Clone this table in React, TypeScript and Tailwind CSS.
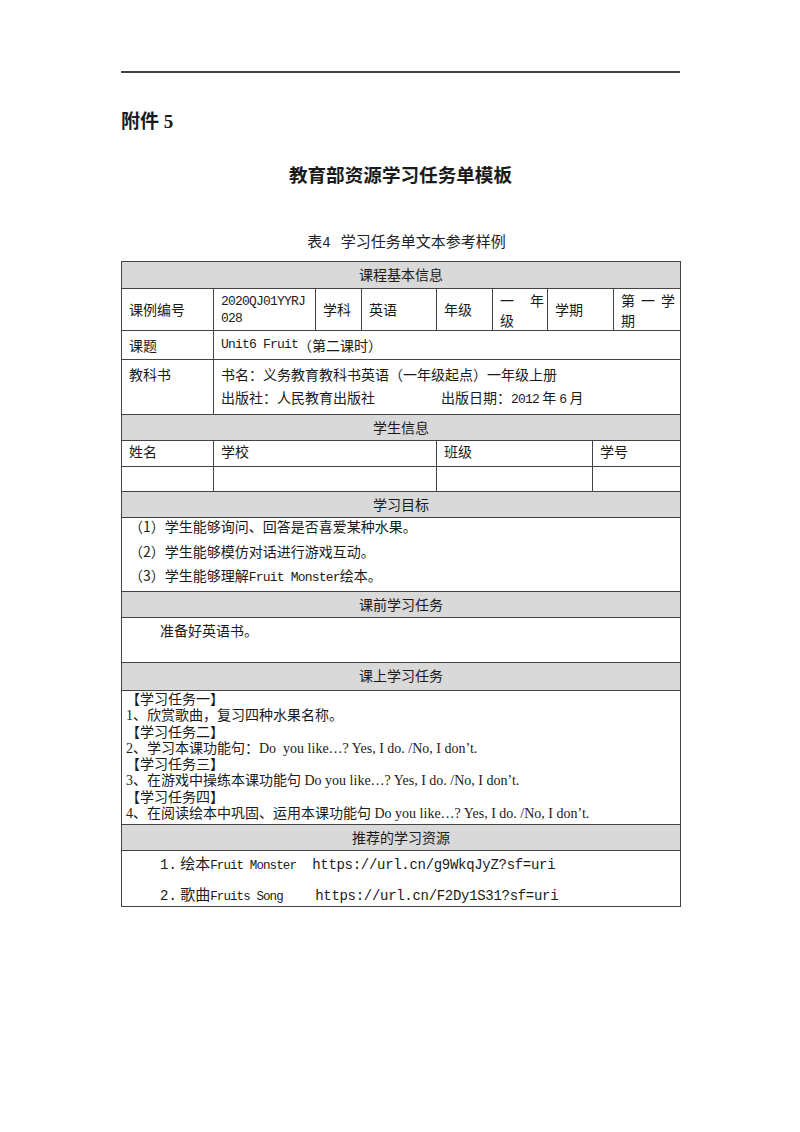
import React from 'react';

// Latin runs in the cells are set in a narrow monospace like SimSun's half-width glyphs
function M({ children, size = 'text-[13px] tracking-[-0.8px]' }: { children: React.ReactNode; size?: string }) {
  return <span className={`font-['Liberation_Mono',monospace] ${size}`}>{children}</span>;
}

function Band({ title, h }: { title: string; h: string }) {
  return (
    <div className={`${h} flex justify-center items-start pt-[2px] bg-[#d9d9d9] border-b border-[#444] leading-[20px]`}>
      {title}
    </div>
  );
}

export default function App() {
  return (
    <div className="w-[800px] h-[1132px] bg-white text-[#1a1a1a] font-['Noto_Sans_CJK_SC',sans-serif]">
      <div className="pt-[71px] ml-[121px] w-[559px]">
        <div className="h-[2px] bg-[#444]" />

        {/* Heading */}
        <div className="mt-[37px] text-[19px] font-bold leading-[24px] font-['Liberation_Serif','Noto_Sans_CJK_SC',serif]">
          附件 5
        </div>
        <div className="mt-[28px] text-center text-[18.6px] font-bold leading-[24px]">教育部资源学习任务单模板</div>
        <div className="mt-[45px] pl-[12px] text-center text-[15px] leading-[20px] text-[#222]">
          表<M size="text-[14px]">4</M>&nbsp;&nbsp;&nbsp;学习任务单文本参考样例
        </div>
      </div>

      {/* Table */}
      <div className="mt-[8px] ml-[121px] w-[560px] border border-[#444] text-[14px]">
        <Band title="课程基本信息" h="h-[27px]" />

        <div className="h-[42px] flex border-b border-[#444] leading-[17px]">
          <div className="w-[92px] shrink-0 border-r border-[#444] pl-[7px] flex items-center">课例编号</div>
          <div className="w-[102px] shrink-0 border-r border-[#444] pl-[7px] flex flex-col justify-center">
            <M>2020QJ01YYRJ</M>
            <M>028</M>
          </div>
          <div className="w-[46px] shrink-0 border-r border-[#444] pl-[7px] flex items-center">学科</div>
          <div className="w-[75px] shrink-0 border-r border-[#444] pl-[7px] flex items-center">英语</div>
          <div className="w-[56px] shrink-0 border-r border-[#444] pl-[7px] flex items-center">年级</div>
          <div className="w-[55px] shrink-0 border-r border-[#444] pl-[7px] pr-[3px] flex flex-col justify-center leading-[20px]">
            <div className="flex justify-between"><span>一</span><span>年</span></div>
            <div>级</div>
          </div>
          <div className="w-[66px] shrink-0 border-r border-[#444] pl-[7px] flex items-center">学期</div>
          <div className="flex-1 pl-[7px] pr-[5px] flex flex-col justify-center leading-[20px]">
            <div className="flex justify-between"><span>第</span><span>一</span><span>学</span></div>
            <div>期</div>
          </div>
        </div>

        <div className="h-[29px] flex border-b border-[#444]">
          <div className="w-[92px] shrink-0 border-r border-[#444] pl-[7px] flex items-center">课题</div>
          <div className="flex-1 pl-[7px] flex items-center">
            <M>Unit6 Fruit</M>（第二课时）
          </div>
        </div>

        <div className="h-[55px] flex border-b border-[#444] leading-[23px]">
          <div className="w-[92px] shrink-0 border-r border-[#444] pl-[7px] pt-[3px]">教科书</div>
          <div className="flex-1 pl-[7px] pt-[3px]">
            <div>书名：义务教育教科书英语（一年级起点）一年级上册</div>
            <div className="flex">
              <span className="w-[220px]">出版社：人民教育出版社</span>
              <span>出版日期：<M>2012</M> 年 <M>6</M> 月</span>
            </div>
          </div>
        </div>

        <Band title="学生信息" h="h-[26px]" />

        <div className="h-[26px] flex border-b border-[#444] leading-[20px]">
          <div className="w-[92px] shrink-0 border-r border-[#444] pl-[7px]">姓名</div>
          <div className="w-[223px] shrink-0 border-r border-[#444] pl-[7px]">学校</div>
          <div className="w-[156px] shrink-0 border-r border-[#444] pl-[7px]">班级</div>
          <div className="flex-1 pl-[7px]">学号</div>
        </div>
        <div className="h-[25px] flex border-b border-[#444]">
          <div className="w-[92px] shrink-0 border-r border-[#444]" />
          <div className="w-[223px] shrink-0 border-r border-[#444]" />
          <div className="w-[156px] shrink-0 border-r border-[#444]" />
          <div className="flex-1" />
        </div>

        <Band title="学习目标" h="h-[26px]" />

        <div className="h-[74px] flex flex-col gap-[8.5px] pl-[7px] border-b border-[#444] leading-[16px]">
          <div>（1）学生能够询问、回答是否喜爱某种水果。</div>
          <div>（2）学生能够模仿对话进行游戏互动。</div>
          <div>（3）学生能够理解<M>Fruit Monster</M>绘本。</div>
        </div>

        <Band title="课前学习任务" h="h-[26px]" />

        <div className="h-[45px] pl-[38px] pt-[2px] border-b border-[#444] leading-[20px]">准备好英语书。</div>

        <Band title="课上学习任务" h="h-[28px]" />

        <div className="h-[134px] pl-[4px] pt-[1px] border-b border-[#444] leading-[16.3px] font-['Liberation_Serif','Noto_Sans_CJK_SC',serif]">
          <div>【学习任务一】</div>
          <div>1、欣赏歌曲，复习四种水果名称。</div>
          <div>【学习任务二】</div>
          <div>2、学习本课功能句：Do&nbsp; you like…? Yes, I do. /No, I don’t.</div>
          <div>【学习任务三】</div>
          <div>3、在游戏中操练本课功能句 Do you like…? Yes, I do. /No, I don’t.</div>
          <div>【学习任务四】</div>
          <div>4、在阅读绘本中巩固、运用本课功能句 Do you like…? Yes, I do. /No, I don’t.</div>
        </div>

        <Band title="推荐的学习资源" h="h-[26px]" />

        <div className="h-[55px] pl-[38px] pt-[2px] flex flex-col gap-[8px] leading-[20px] text-[15px]">
          <div>
            <M size="text-[14px]">1.</M> 绘本<M size="text-[12.5px] tracking-[-0.9px]">Fruit Monster</M>
            <M size="text-[14px] tracking-[-0.3px]">&nbsp; https://url.cn/g9WkqJyZ?sf=uri</M>
          </div>
          <div>
            <M size="text-[14px]">2.</M> 歌曲<M size="text-[12.5px] tracking-[-0.9px]">Fruits Song</M>
            <M size="text-[14px] tracking-[-0.3px]">&nbsp;&nbsp;&nbsp; https://url.cn/F2Dy1S31?sf=uri</M>
          </div>
        </div>
      </div>
    </div>
  );
}
